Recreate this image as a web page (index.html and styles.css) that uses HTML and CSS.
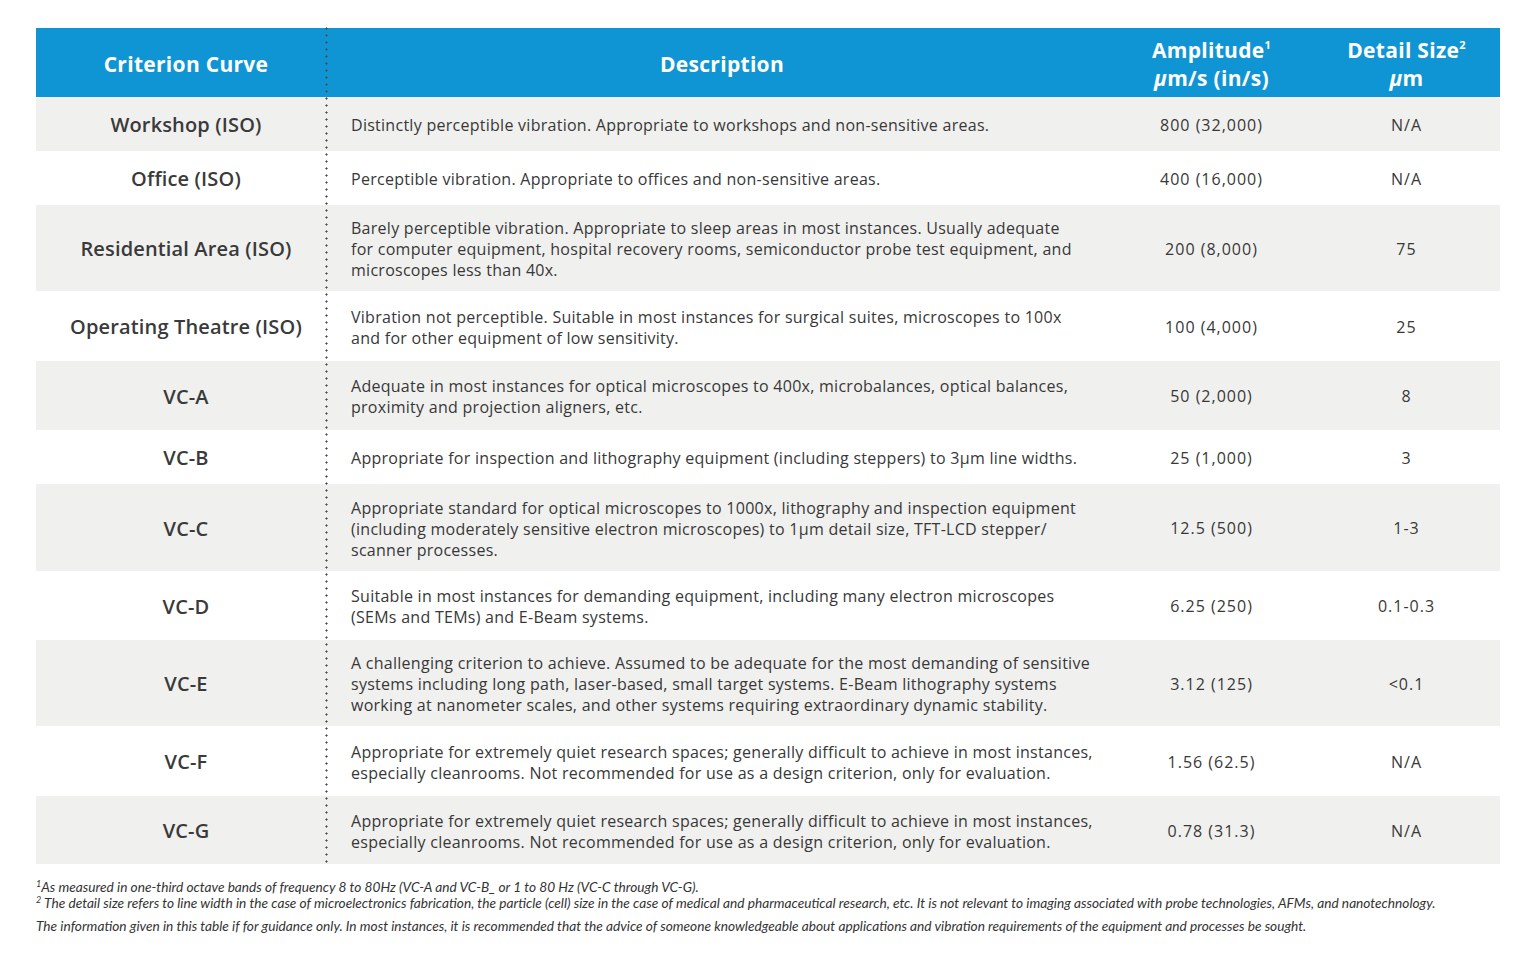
FILE: index.html
```html
<!DOCTYPE html>
<html lang="en">
<head>
<meta charset="utf-8">
<title>Vibration Criteria</title>
<link rel="stylesheet" href="styles.css">
</head>
<body>
<div class="sheet">
  <div class="table-wrap">
    <table class="criteria">
      <colgroup>
        <col class="c-name"><col class="c-desc"><col class="c-amp"><col class="c-det">
      </colgroup>
      <thead>
        <tr class="head">
          <th class="th-name">Criterion Curve</th>
          <th>Description</th>
          <th>Amplitude<sup>1</sup><br><span class="mu">μ</span>m/s (in/s)</th>
          <th>Detail Size<sup>2</sup><br><span class="mu">μ</span>m</th>
        </tr>
      </thead>
      <tbody>
        <tr class="grey h1">
          <td class="name">Workshop (ISO)</td>
          <td class="desc">Distinctly perceptible vibration. Appropriate to workshops and non-sensitive areas.</td>
          <td class="num">800 (32,000)</td>
          <td class="num">N/A</td>
        </tr>
        <tr class="h1">
          <td class="name">Office (ISO)</td>
          <td class="desc">Perceptible vibration. Appropriate to offices and non-sensitive areas.</td>
          <td class="num">400 (16,000)</td>
          <td class="num">N/A</td>
        </tr>
        <tr class="grey h3">
          <td class="name">Residential Area (ISO)</td>
          <td class="desc">Barely perceptible vibration. Appropriate to sleep areas in most instances. Usually adequate<br>for computer equipment, hospital recovery rooms, semiconductor probe test equipment, and<br>microscopes less than 40x.</td>
          <td class="num">200 (8,000)</td>
          <td class="num">75</td>
        </tr>
        <tr class="h2b">
          <td class="name">Operating Theatre (ISO)</td>
          <td class="desc">Vibration not perceptible. Suitable in most instances for surgical suites, microscopes to 100x<br>and for other equipment of low sensitivity.</td>
          <td class="num">100 (4,000)</td>
          <td class="num">25</td>
        </tr>
        <tr class="grey h2">
          <td class="name">VC-A</td>
          <td class="desc">Adequate in most instances for optical microscopes to 400x, microbalances, optical balances,<br>proximity and projection aligners, etc.</td>
          <td class="num">50 (2,000)</td>
          <td class="num">8</td>
        </tr>
        <tr class="h1">
          <td class="name">VC-B</td>
          <td class="desc">Appropriate for inspection and lithography equipment (including steppers) to 3μm line widths.</td>
          <td class="num">25 (1,000)</td>
          <td class="num">3</td>
        </tr>
        <tr class="grey h3b">
          <td class="name">VC-C</td>
          <td class="desc">Appropriate standard for optical microscopes to 1000x, lithography and inspection equipment<br>(including moderately sensitive electron microscopes) to 1μm detail size, TFT-LCD stepper/<br>scanner processes.</td>
          <td class="num">12.5 (500)</td>
          <td class="num">1-3</td>
        </tr>
        <tr class="h2">
          <td class="name">VC-D</td>
          <td class="desc">Suitable in most instances for demanding equipment, including many electron microscopes<br>(SEMs and TEMs) and E-Beam systems.</td>
          <td class="num">6.25 (250)</td>
          <td class="num">0.1-0.3</td>
        </tr>
        <tr class="grey h3">
          <td class="name">VC-E</td>
          <td class="desc">A challenging criterion to achieve. Assumed to be adequate for the most demanding of sensitive<br>systems including long path, laser-based, small target systems. E-Beam lithography systems<br>working at nanometer scales, and other systems requiring extraordinary dynamic stability.</td>
          <td class="num">3.12 (125)</td>
          <td class="num">&lt;0.1</td>
        </tr>
        <tr class="h2b">
          <td class="name">VC-F</td>
          <td class="desc">Appropriate for extremely quiet research spaces; generally difficult to achieve in most instances,<br>especially cleanrooms. Not recommended for use as a design criterion, only for evaluation.</td>
          <td class="num">1.56 (62.5)</td>
          <td class="num">N/A</td>
        </tr>
        <tr class="grey h2c">
          <td class="name">VC-G</td>
          <td class="desc">Appropriate for extremely quiet research spaces; generally difficult to achieve in most instances,<br>especially cleanrooms. Not recommended for use as a design criterion, only for evaluation.</td>
          <td class="num">0.78 (31.3)</td>
          <td class="num">N/A</td>
        </tr>
      </tbody>
    </table>
    <div class="dots" aria-hidden="true"></div>
  </div>
  <div class="notes">
    <p class="note"><sup>1</sup>As measured in one-third octave bands of frequency 8 to 80Hz (VC-A and VC-B_ or 1 to 80 Hz (VC-C through VC-G).</p>
    <p class="note"><sup>2</sup> The detail size refers to line width in the case of microelectronics fabrication, the particle (cell) size in the case of medical and pharmaceutical research, etc. It is not relevant to imaging associated with probe technologies, AFMs, and nanotechnology.</p>
    <p class="note gap">The information given in this table if for guidance only. In most instances, it is recommended that the advice of someone knowledgeable about applications and vibration requirements of the equipment and processes be sought.</p>
  </div>
</div>
</body>
</html>
```

FILE: styles.css
```css
* { box-sizing: border-box; }
html, body { margin: 0; padding: 0; background: #ffffff; }
body {
  font-family: "Open Sans", "Liberation Sans", sans-serif;
  color: #3b3b3b;
}
.sheet {
  padding: 28px 36px 0 36px;
  width: 1536px;
}
.table-wrap {
  position: relative;
  width: 1464px;
}
.criteria {
  width: 1464px;
  border-collapse: collapse;
  table-layout: fixed;
}
.c-name { width: 290px; }
.c-desc { width: 784px; }
.c-amp { width: 203px; }
.c-det { width: 187px; }

.head { height: 69px; background: #0f95d3; }
.head th {
  color: #ffffff;
  font-weight: 700;
  font-size: 21px;
  letter-spacing: 0.3px;
  line-height: 28px;
  text-align: center;
  padding: 3px 0 0 0;
  vertical-align: middle;
}
.head th.th-name { padding-left: 10px; }
.head th:nth-child(2) { padding-left: 8px; }
.head sup {
  font-size: 11px;
  vertical-align: top;
  line-height: 1;
  position: relative;
  top: 3px;
}
.mu { font-style: italic; }

tbody tr { background: #ffffff; }
tbody tr.grey { background: #f0f0ef; }
tr.h1 { height: 54px; }
tr.h2 { height: 69px; }
tr.h2b { height: 70px; }
tr.h2c { height: 68px; }
tr.h3 { height: 86px; }
tr.h3b { height: 87px; }

td { padding: 0; vertical-align: middle; }
td.name {
  text-align: center;
  font-size: 20px;
  letter-spacing: 0.15px;
  font-weight: 600;
  color: #3a3a3a;
  padding-left: 10px;
  padding-top: 1px;
}
td.desc {
  text-align: left;
  font-size: 16px;
  letter-spacing: 0.27px;
  line-height: 21px;
  padding-left: 25px;
  padding-top: 3px;
  color: #383838;
}
td.num {
  text-align: center;
  font-size: 16px;
  letter-spacing: 1px;
  color: #383838;
  padding-top: 1px;
}

.dots {
  position: absolute;
  left: 289px;
  top: -3px;
  bottom: -3px;
  width: 3px;
  background-image: radial-gradient(circle, #4a4a4a 0.9px, transparent 1.2px);
  background-size: 3px 7px;
  background-repeat: repeat-y;
}

.notes {
  padding-top: 15px;
}
.note {
  margin: 0;
  font-family: "Lato", "Liberation Sans", sans-serif;
  font-size: 13.7px;
  line-height: 16px;
  font-style: italic;
  color: #333333;
}
.note sup {
  font-size: 9px;
  vertical-align: top;
  line-height: 1;
}
.note.gap { margin-top: 7px; }
```
